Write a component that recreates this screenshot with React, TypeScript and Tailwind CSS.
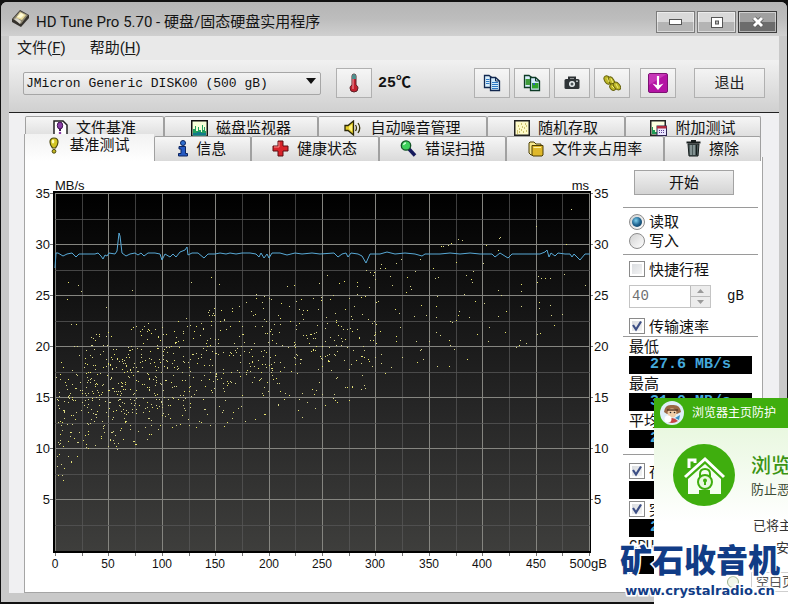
import { ReactNode, useState } from "react"

const CJK = "font-['Liberation_Sans','Noto_Sans_CJK_SC',sans-serif]"
const UI = "font-['Roboto','Noto_Sans_CJK_SC',sans-serif]"
const MONO = "font-['Liberation_Mono','Noto_Sans_CJK_SC',monospace]"

/* ---------- icons ---------- */

function DiskIcon() {
    return (
        <svg width="18" height="18" viewBox="0 0 18 18" aria-hidden="true">
            <path d="M0 9 L8 0 L17 5 L17 8 L9 17 L0 12 Z" fill="#35322d" />
            <path d="M1 9 L8 1 L16 5 L9 14 Z" fill="#8f8873" />
            <path d="M4 8 L8 2 L14 5 L10 10 Z" fill="#e9dc9c" />
            <path d="M5 7 L9 3 L12 5 L9 8 Z" fill="#fffbd8" />
            <path d="M2 9 L5 8 L9 11 L8 14 Z" fill="#d5d2c8" />
        </svg>
    )
}

function ThermometerIcon() {
    return (
        <svg width="14" height="20" viewBox="0 0 14 20" aria-hidden="true">
            <path d="M5 3 Q5 1 7 1 Q9 1 9 3 V12 Q11 13 11 15 Q11 19 7 19 Q3 19 3 15 Q3 13 5 12 Z" fill="#c3202f" stroke="#5c2228" />
            <path d="M5 3 Q5 1 7 1 Q9 1 9 3 V6 H5 Z" fill="#4f8f8d" />
            <path d="M6 6 V16" stroke="#f4a0a8" />
        </svg>
    )
}

function CopyIcon({ picture = false }: { picture?: boolean }) {
    const ink = picture ? "#0d3b26" : "#12284f"
    return (
        <svg width="18" height="18" viewBox="0 0 18 18" aria-hidden="true">
            <path d="M1.500 1.500 H6 L9.500 4 V13.500 H1.500 Z" fill="#d9effc" stroke={ink} strokeWidth="1.300" />
            <path d="M7.500 3.500 H12.500 L16.500 7 V16.500 H7.500 Z" fill="#d3ebfb" stroke={ink} strokeWidth="1.300" />
            <path d="M12.500 3.500 V7 H16.500" fill="none" stroke={ink} />
            {picture ? (
                <g>
                    <rect x="2.500" y="5" width="4.500" height="6" fill="#3f9b3a" />
                    <rect x="9" y="9" width="6.500" height="5.500" fill="#2fa32c" />
                    <rect x="10" y="9" width="2" height="2" fill="#2d66b5" />
                </g>
            ) : (
                <path d="M3 5.500 H6.500 M3 7.500 H6.500 M3 9.500 H6.500 M9 8.500 H15 M9 10.500 H15 M9 12.500 H15 M9 14.500 H15" stroke="#2d78c4" />
            )}
        </svg>
    )
}

function CameraIcon() {
    return (
        <svg width="16" height="14" viewBox="0 0 16 14" aria-hidden="true">
            <path d="M5 3 V1.500 H11 V3" fill="none" stroke="#2b3033" strokeWidth="2" />
            <rect x="0.500" y="3" width="15" height="10" rx="1.500" fill="#2f3437" />
            <circle cx="8" cy="8" r="3" fill="#e9eef0" />
            <circle cx="8" cy="8" r="1.500" fill="#4d5558" />
            <rect x="12" y="4.500" width="2" height="1.500" fill="#aeb6b8" />
        </svg>
    )
}

function CoinsIcon() {
    return (
        <svg width="18" height="18" viewBox="0 0 18 18" aria-hidden="true">
            <g fill="#bdb728" stroke="#66620f">
                <ellipse cx="4.500" cy="6" rx="3" ry="4.500" transform="rotate(-30 4.500 6)" />
                <ellipse cx="8.500" cy="7" rx="2.500" ry="4.500" transform="rotate(-30 8.500 7)" />
                <ellipse cx="10" cy="13" rx="3" ry="3.500" transform="rotate(-40 10 13)" />
                <ellipse cx="14" cy="12" rx="2.800" ry="4.500" transform="rotate(-40 14 12)" />
            </g>
            <path d="M4 4 L6 8 M8 4.500 L10 9 M9 12 L11 14 M13 10 L15 14" stroke="#f0ec76" />
        </svg>
    )
}

function DownIcon() {
    return (
        <svg width="20" height="20" viewBox="0 0 20 20" aria-hidden="true">
            <rect x="0.500" y="0.500" width="19" height="19" rx="1.500" fill="#b414a4" stroke="#7c1272" />
            <path d="M1 1 H19 L1 12 Z" fill="#cf45c1" opacity="0.700" />
            <path d="M10 3 V13" stroke="#fff" strokeWidth="2.200" />
            <path d="M4.500 10.500 L10 12.500 L15.500 10.500 L10 17 Z" fill="#fff" />
        </svg>
    )
}

function FileMarkIcon() {
    return (
        <svg width="15" height="16" viewBox="0 0 15 16" aria-hidden="true">
            <path d="M1 1 H10 L14 5 V15 H1 Z" fill="#fff" stroke="#222" strokeWidth="1.500" />
            <ellipse cx="7" cy="5.500" rx="2.700" ry="3.500" fill="#8b3fa8" stroke="#3d1450" />
            <path d="M6 9 H8 V11 H6 Z" fill="#3d1450" />
            <circle cx="7" cy="13" r="1.300" fill="#8b3fa8" />
        </svg>
    )
}

function MonitorIcon() {
    return (
        <svg width="17" height="17" viewBox="0 0 17 17" aria-hidden="true">
            <rect x="0.750" y="0.750" width="15.500" height="15.500" fill="#f7ffd9" stroke="#111" strokeWidth="1.500" />
            <path d="M2 15.500 V9 H4 V6 H5 V11 H7 V7 H8 V10 H10 V12 H11 V5 H12 V10 H13 V7 H14 V11 H15 V15.500 Z" fill="#21a05f" />
            <path d="M2 15.500 V13 H6 V12 H10 V13 H15 V15.500 Z" fill="#127a8a" />
        </svg>
    )
}

function SpeakerIcon() {
    return (
        <svg width="18" height="16" viewBox="0 0 18 16" aria-hidden="true">
            <path d="M1 5.500 H4 L9.500 1 V15 L4 10.500 H1 Z" fill="#e6cf2c" stroke="#2c2808" strokeWidth="1.300" />
            <path d="M5 6.500 L8 4.500 V11.500 L5 9 Z" fill="#fff27a" />
            <path d="M11.500 5 Q13.500 8 11.500 11 M14 3 Q17.500 8 14 13" fill="none" stroke="#3c370e" strokeWidth="1.300" />
        </svg>
    )
}

function RandomIcon() {
    return (
        <svg width="16" height="16" viewBox="0 0 16 16" aria-hidden="true">
            <rect x="0.750" y="0.750" width="14.500" height="14.500" fill="#fffbc9" stroke="#222" strokeWidth="1.500" />
            <path d="M3 11h1M5 12h1M5 9h1M7 10h1M8 7h1M10 8h1M11 4h1M12 6h1M9 12h1M12 11h1M4 6h1M7 4h1M3 13h1" stroke="#a08c18" />
        </svg>
    )
}

function ExtraIcon() {
    return (
        <svg width="17" height="16" viewBox="0 0 17 16" aria-hidden="true">
            <rect x="0.750" y="0.750" width="14.500" height="14.500" fill="#fbffe0" stroke="#222" strokeWidth="1.500" />
            <path d="M2 14 V7 H3 V10 H5 V12 H7 V14 Z" fill="#1f9a55" />
            <rect x="7" y="6" width="9.500" height="9.500" fill="#e9e4ff" stroke="#2e2450" />
            <rect x="7" y="6" width="9.500" height="2.500" fill="#b02a3d" />
            <path d="M9 10.500h6M9 12.500h6" stroke="#5a3f8f" strokeDasharray="1 1" />
        </svg>
    )
}

function BulbIcon() {
    return (
        <svg width="10" height="17" viewBox="0 0 10 17" aria-hidden="true">
            <path d="M5 1 Q9 1 9 5 Q9 8 6.500 11 H3.500 Q1 8 1 5 Q1 1 5 1 Z" fill="#d3c625" stroke="#4e4a10" strokeWidth="1.200" />
            <ellipse cx="4" cy="4.500" rx="1.300" ry="2" fill="#fffcb5" />
            <circle cx="5" cy="14.300" r="1.900" fill="#c2b620" stroke="#4e4a10" />
        </svg>
    )
}

function InfoIcon() {
    return (
        <svg width="10" height="17" viewBox="0 0 10 17" aria-hidden="true">
            <circle cx="5" cy="3" r="2.500" fill="#2f6fd0" stroke="#0c2560" />
            <path d="M1 6.500 H7.500 V13.500 H9.500 V16 H0.500 V13.500 H3 V9 H1 Z" fill="#2559c2" stroke="#0c2560" />
        </svg>
    )
}

function CrossIcon() {
    return (
        <svg width="17" height="17" viewBox="0 0 17 17" aria-hidden="true">
            <path d="M6 1 H11 V6 H16 V11 H11 V16 H6 V11 H1 V6 H6 Z" fill="#d8232a" stroke="#5d0f12" />
            <path d="M7 2 V7 H2" fill="none" stroke="#f58f8c" />
        </svg>
    )
}

function MagnifierIcon() {
    return (
        <svg width="17" height="17" viewBox="0 0 17 17" aria-hidden="true">
            <path d="M9 9 L15 15.500" stroke="#15195c" strokeWidth="3.500" />
            <circle cx="6" cy="5.500" r="4.700" fill="#3fd05c" stroke="#145426" strokeWidth="1.300" />
            <path d="M3.500 5 Q4 3 6 3" fill="none" stroke="#c9ffd0" strokeWidth="1.300" />
        </svg>
    )
}

function FolderIcon() {
    return (
        <svg width="16" height="16" viewBox="0 0 16 16" aria-hidden="true">
            <path d="M1 2 L2 1 H6 L8 3 H13 V12 L11 14 H3 L1 12 Z" fill="#f5e78c" stroke="#4c3e05" />
            <path d="M4 4.500 H15 V14 L14 15 H5 L4 14 Z" fill="#dfb82a" stroke="#4c3e05" />
            <path d="M5.500 6.500 H13" stroke="#fff2a0" />
        </svg>
    )
}

function TrashIcon() {
    return (
        <svg width="15" height="17" viewBox="0 0 15 17" aria-hidden="true">
            <path d="M0.500 2.500 H14.500 M5 1 H10" stroke="#161d1d" strokeWidth="2" />
            <path d="M2 4 H13 L12 16 H3 Z" fill="#4d5c5c" stroke="#161d1d" />
            <path d="M5 5 V15 M8 5 V15" stroke="#b9c8c8" />
            <path d="M10.500 5 V15" stroke="#161d1d" />
        </svg>
    )
}

/* ---------- tabs ---------- */

const upperTabs = [
    { name: "文件基准", icon: <FileMarkIcon /> },
    { name: "磁盘监视器", icon: <MonitorIcon /> },
    { name: "自动噪音管理", icon: <SpeakerIcon /> },
    { name: "随机存取", icon: <RandomIcon /> },
    { name: "附加测试", icon: <ExtraIcon /> },
]

const lowerTabs = [
    { name: "基准测试", icon: <BulbIcon /> },
    { name: "信息", icon: <InfoIcon /> },
    { name: "健康状态", icon: <CrossIcon /> },
    { name: "错误扫描", icon: <MagnifierIcon /> },
    { name: "文件夹占用率", icon: <FolderIcon /> },
    { name: "擦除", icon: <TrashIcon /> },
]

function Tab({ name, icon, active = false }: { name: string, icon: ReactNode, active?: boolean }) {
    return (
        <button
            type="button"
            role="tab"
            aria-selected={active}
            className={
                active
                    ? "z-10 -mt-0.5 flex items-center justify-center gap-2.5 whitespace-nowrap border-l border-[#a5a5a5] bg-linear-to-b from-[#f2f2f2] to-white pb-1"
                    : "flex items-center justify-center gap-2 whitespace-nowrap rounded-t-xs border border-b-0 border-[#a0a0a0] bg-linear-to-b from-[#f6f6f6] to-[#dadada]"
            }
        >
            {icon}
            <span>{name}</span>
        </button>
    )
}

/* ---------- chart ---------- */

const LEFT = 55
const RIGHT = 589
const TOP = 193
const STEP_Y = 51

const transferRate = [
    55, 268, 56, 253, 58, 253, 63, 256, 67, 254, 72, 253, 76, 257, 79, 254, 85, 254, 95, 254, 98, 253, 101, 256, 103, 259,
    105, 255, 107, 256, 109, 253, 115, 254, 117, 251, 119, 233, 120, 236, 122, 253, 126, 256, 130, 254, 135, 253, 138, 255,
    141, 253, 144, 256, 148, 253, 155, 253, 160, 254, 162, 260, 165, 254, 170, 257, 173, 254, 176, 257, 180, 252, 185, 250,
    187, 247, 188, 255, 192, 253, 198, 253, 204, 258, 208, 254, 215, 254, 220, 253, 226, 254, 230, 253, 236, 254, 242, 253,
    250, 253, 256, 254, 259, 257, 261, 253, 264, 258, 267, 254, 269, 258, 272, 253, 280, 253, 287, 255, 295, 253, 302, 254,
    312, 253, 320, 254, 334, 253, 338, 257, 342, 254, 346, 253, 348, 257, 351, 253, 358, 254, 362, 256, 366, 263, 370, 254,
    380, 254, 387, 252, 395, 254, 405, 253, 415, 254, 422, 256, 425, 254, 440, 254, 450, 253, 460, 254, 470, 253, 480, 254,
    492, 254, 495, 257, 500, 253, 508, 258, 512, 254, 525, 254, 540, 254, 545, 252, 547, 250, 549, 257, 551, 253, 555, 256,
    558, 253, 565, 254, 570, 254, 572, 257, 574, 254, 580, 260, 585, 254, 590, 254,
]

// access time samples per 25 gB slice: how many, fastest and slowest in ms
const slices = [
    [85, 5, 18], [105, 9.8, 21], [120, 9.8, 21.5], [95, 10, 22], [80, 11.5, 22.5], [66, 12, 23],
    [60, 12, 24], [58, 12.5, 25], [50, 13, 25.5], [50, 12.5, 26], [50, 14, 27], [48, 14.5, 27], [32, 16, 28],
]

// samples far from the rest, in chart coordinates
const loose = [
    68, 282, 78, 285, 81, 291, 67, 299, 106, 307, 71, 324, 76, 324, 132, 290, 191, 282, 211, 277, 219, 284, 287, 286, 294, 285,
    380, 268, 381, 264, 385, 268, 396, 263, 401, 259, 407, 277, 410, 286, 411, 289, 406, 292, 415, 271, 420, 259, 433, 268,
    435, 278, 438, 277, 441, 246, 443, 246, 448, 245, 451, 243, 458, 239, 462, 240, 456, 262, 473, 271, 466, 275, 471, 279,
    472, 282, 464, 294, 475, 301, 484, 303, 483, 263, 486, 245, 499, 238, 500, 237, 498, 250, 498, 290, 501, 295, 521, 284,
    521, 291, 536, 226, 537, 282, 538, 276, 541, 278, 545, 278, 550, 278, 564, 274, 566, 244, 571, 209, 585, 285, 539, 302,
    550, 305, 551, 315, 554, 325, 562, 314, 537, 334, 540, 333, 539, 308, 521, 306, 506, 311, 498, 316, 489, 327, 505, 332,
    488, 341, 520, 340, 519, 345, 526, 343, 516, 347, 477, 334, 469, 317, 459, 311, 458, 315, 450, 321, 452, 322, 456, 320,
    440, 335, 436, 332, 449, 340, 450, 345, 454, 349, 467, 359, 429, 341, 437, 366, 449, 366, 420, 350, 421, 349, 417, 362,
    423, 359, 426, 315, 436, 306, 436, 317, 437, 296, 421, 305, 414, 316, 399, 313, 395, 309, 392, 285, 390, 276, 396, 336,
    402, 357, 381, 363, 385, 373, 391, 367, 381, 354, 376, 302, 378, 301, 375, 332, 396, 341, 400, 327, 416, 341, 380, 331,
]

function scatter() {
    const dots: number[][] = []
    let seed = 90217
    const next = () => {
        seed = (seed * 16807) % 2147483647
        return seed / 2147483647
    }
    slices.slice(0, 12).forEach(([count, low, high], i) => {
        const [, nextLow, nextHigh] = slices[i + 1]
        for (let n = 0; n < count; n++) {
            const t = next()
            const from = low + (nextLow - low) * t
            const to = high + (nextHigh - high) * t
            const spread = next() < 0.6 ? next() : (next() + next() + next()) / 3
            dots.push([Math.round(LEFT + 1 + (i + t) * 26.7), Math.round(550 - (from + spread * (to - from)) * 10.2)])
        }
    })
    for (let i = 0; i < loose.length; i += 2) dots.push([loose[i], loose[i + 1]])
    return dots
}

const dots = scatter()

function Chart() {
    const columns = Array.from({ length: 21 }, (_, i) => Math.round(LEFT + (i * (RIGHT - LEFT)) / 20))
    const rows = Array.from({ length: 14 }, (_, i) => Math.round(TOP + (i * STEP_Y) / 2))
    const labels = [35, 30, 25, 20, 15, 10, 5]
    return (
        <svg viewBox="25 157 590 435" className={`block h-auto w-full ${CJK}`} role="img" aria-label="基准测试">
            <defs>
                <linearGradient id="plot" x1="0" y1="0" x2="0" y2="1">
                    <stop offset="0" stopColor="#000" />
                    <stop offset="0.300" stopColor="#131313" />
                    <stop offset="0.600" stopColor="#262626" />
                    <stop offset="1" stopColor="#3e3e3c" />
                </linearGradient>
            </defs>
            <rect x="53" y="191" width="538" height="362" fill="#000" />
            <rect x="55" y="193" width="535" height="358" fill="url(#plot)" />
            <g shapeRendering="crispEdges">
                {columns.map((x, i) => (
                    <rect key={x} x={x} y="193" width="1" height="358" fill={i % 2 ? "#5a5a5a" : "#858580"} fillOpacity={i % 2 ? 0.7 : 1} />
                ))}
                {rows.map((y, i) => (
                    <rect key={y} x="55" y={y} width="535" height="1" fill={i % 2 ? "#555" : "#858580"} fillOpacity={i % 2 ? 0.8 : 1} />
                ))}
                {columns.map((x) => <rect key={x} x={x} y="553" width="1" height="3" fill="#777" />)}
                {labels.map((label, i) => (
                    <g key={label} fill="#777">
                        <rect x="50" y={TOP + i * STEP_Y} width="3" height="1" />
                        <rect x="591" y={TOP + i * STEP_Y} width="2" height="1" />
                    </g>
                ))}
                {dots.map(([x, y], i) => (
                    <rect key={i} x={x} y={y} width="1" height="1" fill={i % 3 ? "#d8d58a" : "#ece86c"} />
                ))}
            </g>
            <polyline points={transferRate.join(" ")} fill="none" stroke="#58a9d6" strokeWidth="1" />
            <g fill="#111" fontSize="13">
                <text x="55" y="190">MB/s</text>
                <text x="589" y="190" textAnchor="end">ms</text>
                {labels.map((label, i) => (
                    <g key={label}>
                        <text x="50" y={198 + i * STEP_Y} textAnchor="end">{label}</text>
                        <text x="594" y={198 + i * STEP_Y}>{label}</text>
                    </g>
                ))}
                {Array.from({ length: 10 }, (_, i) => (
                    <text key={i} x={columns[i * 2]} y="568" fontSize="12" textAnchor="middle">{i * 50}</text>
                ))}
                <text x="607" y="568" textAnchor="end">500gB</text>
            </g>
        </svg>
    )
}

/* ---------- side column ---------- */

function Tick({ label, checked = false }: { label: string, checked?: boolean }) {
    const [on, setOn] = useState(checked)
    return (
        <label className="flex h-5 items-center gap-1 pl-1.5 whitespace-nowrap">
            <span className="relative h-4 w-4 shrink-0">
                <input
                    type="checkbox"
                    checked={on}
                    onChange={(e) => setOn(e.target.checked)}
                    className="block h-4 w-4 appearance-none border border-[#8a8a8a] bg-linear-to-br from-[#d5d8dc] to-[#f8f8f8] outline-2 -outline-offset-3 outline-white"
                />
                {on && (
                    <svg width="16" height="16" viewBox="0 0 16 16" className="pointer-events-none absolute inset-0" aria-hidden="true">
                        <path d="M4 7 L7 11.500 L12 3.500" fill="none" stroke="#3d4f86" strokeWidth="2.200" />
                    </svg>
                )}
            </span>
            {label}
        </label>
    )
}

function Readout({ value }: { value: string }) {
    return (
        <output className={`mx-1.5 block h-[18px] bg-black text-center text-[15px] leading-[18px] font-bold text-[#45a9dc] ${MONO}`}>
            {value}
        </output>
    )
}

function Side() {
    const [mode, setMode] = useState("read")
    return (
        <div className="flex w-[147px] shrink-0 flex-col pr-1 pl-2 text-[15px] leading-[19px] text-[#111]">
            <button type="button" className="mt-[13px] mr-6 ml-[11px] h-[25px] border border-[#a3a3a3] bg-linear-to-b from-[#f0f0f0] to-[#d4d4d4]">
                开始
            </button>
            <div className="mt-3 border-y border-[#9a9a9a] py-1">
                {[["read", "读取"], ["write", "写入"]].map(([key, text]) => (
                    <label key={key} className="flex h-[19px] items-center gap-1 pl-1.5">
                        <span className="relative h-4 w-4">
                            <input
                                type="radio"
                                name="mode"
                                checked={mode === key}
                                onChange={() => setMode(key)}
                                className="block h-4 w-4 appearance-none rounded-full border border-[#8c8c8c] bg-linear-to-br from-[#d2d2d2] to-white"
                            />
                            {mode === key && (
                                <span className="pointer-events-none absolute inset-[3px] rounded-full bg-radial-[at_40%_35%] from-[#7fd0ee] via-[#1f6390] to-[#0b2c48]" />
                            )}
                        </span>
                        {text}
                    </label>
                ))}
            </div>
            <div className="border-b border-[#9a9a9a] pt-1">
                <Tick label="快捷行程" />
                <div className={`mt-1.5 flex items-center pl-1.5 ${MONO}`}>
                    <div className="flex h-[23px] w-[82px] items-center border border-[#c4c4c4] bg-white">
                        <input aria-label="快捷行程 gB" defaultValue="40" className="w-full min-w-0 pl-0.5 text-[14px] text-[#6f6f6f]" />
                        <span className="flex h-full w-5 shrink-0 flex-col border-l border-[#bbb]">
                            <button type="button" aria-label="+" className="flex flex-1 items-center justify-center border-b border-[#bbb] bg-[#ececec]">
                                <svg width="7" height="4" viewBox="0 0 7 4"><path d="M0 4 L3.500 0 L7 4Z" fill="#9a9a9a" /></svg>
                            </button>
                            <button type="button" aria-label="-" className="flex flex-1 items-center justify-center bg-[#ececec]">
                                <svg width="7" height="4" viewBox="0 0 7 4"><path d="M0 0 L3.500 4 L7 0Z" fill="#9a9a9a" /></svg>
                            </button>
                        </span>
                    </div>
                    <span className="pl-4 text-[14px]">gB</span>
                </div>
                <div className="pt-2">
                    <Tick label="传输速率" checked />
                </div>
            </div>
            <div className="border-b border-[#9a9a9a] pb-1.5">
                <p className="pl-1.5">最低</p>
                <Readout value="27.6 MB/s" />
                <p className="pl-1.5">最高</p>
                <Readout value="31.0 MB/s" />
                <p className="pl-1.5">平均</p>
                <Readout value="28.9 MB/s" />
            </div>
            <div className="pt-1.5">
                <Tick label="存取时间" checked />
                <Readout value="17.8 ms" />
                <Tick label="突发速率" checked />
                <Readout value="28.1 MB/s" />
                <p className={`pl-1.5 text-[14px] ${MONO}`}>CPU占用率</p>
                <Readout value="2.5%" />
            </div>
        </div>
    )
}

/* ---------- window ---------- */

const frameButton = "flex h-[22px] w-[39px] items-center justify-center border outline-1 -outline-offset-2 outline-white/50"
const toolButton = "flex h-[30px] w-9 items-center justify-center border border-[#b0b0b0] bg-linear-to-b from-[#f6f6f6] to-[#e2e2e2]"

function TitleBar() {
    return (
        <header className="flex h-[34px] items-center rounded-t-md bg-linear-to-b from-[#b5b5b5] via-[#bdbdbd] to-[#d0d0d0] pr-2.5 pl-[11px]">
            <DiskIcon />
            <h1 className={`flex-1 truncate pt-1.5 pl-1.5 text-[15px] text-[#141414] ${UI}`}>HD Tune Pro 5.70 - 硬盘/固态硬盘实用程序</h1>
            <div className="flex gap-0.5 pt-1.5">
                <button type="button" aria-label="最小化" className={`${frameButton} border-[#7b7b7b] bg-linear-to-b from-[#d9d9d9] from-50% to-[#b4b4b4] to-50%`}>
                    <svg width="13" height="6" viewBox="0 0 13 6"><rect x="0.500" y="0.500" width="12" height="5" fill="#fff" stroke="#555" /></svg>
                </button>
                <button type="button" aria-label="最大化" className={`${frameButton} border-[#7b7b7b] bg-linear-to-b from-[#d9d9d9] from-50% to-[#b4b4b4] to-50%`}>
                    <svg width="12" height="11" viewBox="0 0 12 11">
                        <rect x="0.500" y="0.500" width="11" height="10" fill="#fff" stroke="#555" />
                        <rect x="4.500" y="4" width="3" height="3" fill="#bbb" stroke="#555" />
                    </svg>
                </button>
                <button type="button" aria-label="关闭" className={`${frameButton} border-[#3c3c3c] bg-linear-to-b from-[#a0a0a0] from-50% to-[#6c6c6c] to-50%`}>
                    <svg width="14" height="12" viewBox="0 0 14 12">
                        <path d="M3 2 L11 10 M11 2 L3 10" stroke="#555" strokeWidth="4.500" />
                        <path d="M3 2 L11 10 M11 2 L3 10" stroke="#fff" strokeWidth="3" />
                    </svg>
                </button>
            </div>
        </header>
    )
}

function Toolbar() {
    return (
        <div className="flex h-[53px] items-start border-b border-[#222] bg-linear-to-b from-[#f1f1f1] to-[#d0d0d0] pt-2 pr-3.5 pl-3.5">
            <div className="relative mt-0.5 mr-[15px] w-[298px] shrink">
                <select
                    aria-label="磁盘"
                    className={`h-[23px] w-full appearance-none rounded-xs border border-[#a6a6a6] bg-linear-to-b from-[#f3f3f3] to-[#dedede] pl-0.5 text-[13px] text-[#111] ${MONO}`}
                >
                    <option>JMicron Generic DISK00 (500 gB)</option>
                </select>
                <svg width="10" height="6" viewBox="0 0 10 6" className="pointer-events-none absolute top-2 right-[5px]"><path d="M0 0 H10 L5 6Z" fill="#111" /></svg>
            </div>
            <button type="button" aria-label="温度" className={toolButton}><ThermometerIcon /></button>
            <span className={`pt-1 pl-1.5 text-[15px] leading-6 font-bold text-[#111] ${MONO}`}>25℃</span>
            <div className="ml-auto flex gap-1">
                <button type="button" aria-label="复制文本" className={toolButton}><CopyIcon /></button>
                <button type="button" aria-label="复制图像" className={toolButton}><CopyIcon picture /></button>
                <button type="button" aria-label="截图" className={toolButton}><CameraIcon /></button>
                <button type="button" aria-label="购买" className={toolButton}><CoinsIcon /></button>
            </div>
            <button type="button" aria-label="保存" className={`ml-2.5 ${toolButton}`}><DownIcon /></button>
            <button type="button" className="ml-[18px] h-[30px] w-[71px] border border-[#b0b0b0] bg-linear-to-b from-[#f4f4f4] to-[#dedede] text-[15px] text-[#222]">
                退出
            </button>
        </div>
    )
}

/* ---------- corner pop-up and site mark ---------- */

function Popup() {
    return (
        <aside className="absolute right-0 bottom-0 z-20 h-[206px] w-[134px] overflow-hidden bg-linear-to-b from-[#e2f5d6] to-white to-60% whitespace-nowrap">
            <div className="flex h-[30px] items-center gap-2 bg-[#3fae0e] pl-1.5">
                <svg width="24" height="24" viewBox="0 0 24 24" className="shrink-0" aria-hidden="true">
                    <circle cx="12" cy="12" r="12" fill="#dfeff8" />
                    <path d="M4 11 Q5 3 12 4 Q20 3 21 11 L17 13 H7 Z" fill="#9a6844" />
                    <circle cx="12" cy="12" r="4.500" fill="#f1cda8" />
                    <path d="M7 9 H18" stroke="#5b3a29" strokeWidth="1.500" />
                    <circle cx="10.500" cy="11.500" r="0.800" fill="#222" />
                    <circle cx="14.500" cy="11.500" r="0.800" fill="#222" />
                    <path d="M6 20 Q12 14 18 20 Q12 24 6 20Z" fill="#c64545" />
                    <circle cx="8" cy="18" r="3.500" fill="#fff" />
                    <path d="M15 17 L20 14 L19 19Z" fill="#3a8fc4" />
                </svg>
                <span className="text-[12px] text-white">浏览器主页防护</span>
            </div>
            <div className="flex pt-4 pl-[19px]">
                <svg width="62" height="62" viewBox="0 0 62 62" className="shrink-0" aria-hidden="true">
                    <circle cx="31" cy="31" r="31" fill="#3fae0e" />
                    <path d="M16 24 V16 H22 V19" fill="none" stroke="#fff" strokeWidth="3" />
                    <path d="M12 33 L32 15 L51 33" fill="none" stroke="#fff" strokeWidth="3" />
                    <path d="M32 20 L48 35 V50 H37 V46 H26 V50 H15 V35 Z" fill="#f4fff0" />
                    <path d="M27 34 V30 Q27 25 32 25 Q37 25 37 30 V34" fill="none" stroke="#3fae0e" strokeWidth="2" />
                    <circle cx="32" cy="38" r="7" fill="#e9f9df" stroke="#3fae0e" strokeWidth="2" />
                    <circle cx="32" cy="36.500" r="2" fill="#3fae0e" />
                    <path d="M32 37 V41" stroke="#3fae0e" strokeWidth="2" />
                </svg>
                <div className="pt-2 pl-4">
                    <p className="text-[20px] leading-7 font-medium text-[#3a9414]">浏览器主页</p>
                    <p className="text-[13px] leading-5 text-[#3c4b36]">防止恶意篡改</p>
                </div>
            </div>
            <p className="pt-2.5 pl-[99px] text-[13px] leading-5 text-[#333]">已将主页锁定</p>
            <p className="pl-[122px] text-[13px] leading-6 text-[#333]">安全</p>
            <label className="flex items-center gap-3 pt-3 pl-[73px] text-[13px] text-[#555]">
                <input type="radio" name="home" className="h-3 w-3 shrink-0 appearance-none rounded-full border border-[#9db38c] bg-[#f2f6ea]" />
                <span className="border border-[#cfcfcf] px-1 leading-[18px]">空白页</span>
            </label>
        </aside>
    )
}

function SiteMark() {
    return (
        <a href="#site" className="absolute right-2 bottom-px z-30 flex flex-col items-center whitespace-nowrap text-[#113c86] [paint-order:stroke_fill] [-webkit-text-stroke:3px_white]">
            <span className="text-[32px] leading-9 font-black">矿石收音机</span>
            <span className="font-['DejaVu_Sans',sans-serif] text-[13px] leading-6 font-bold">www.crystalradio.cn</span>
        </a>
    )
}

export default function App() {
    return (
        <div className={`relative min-h-screen overflow-hidden bg-[#111] px-px py-0.5 ${CJK}`}>
            <div className="rounded-t-md bg-[#c9c9c9] pb-[9px]">
                <TitleBar />
                <div className="mx-2 bg-[#f0f0f2]">
                    <nav className={`flex h-6 items-center gap-6 bg-[#e9e9e9] pl-2 text-[15px] text-[#1a1a1a] ${UI}`}>
                        <button type="button">文件(<u>F</u>)</button>
                        <button type="button">帮助(<u>H</u>)</button>
                    </nav>
                    <Toolbar />
                    <main className="pt-[3px] pr-4 pl-[15px] text-[15px] text-[#111]">
                        <div role="tablist">
                            <div className="grid h-5 grid-cols-[139fr_154fr_169fr_138fr_136fr] pr-0.5 pl-px">
                                {upperTabs.map((tab) => <Tab key={tab.name} {...tab} />)}
                            </div>
                            <div className="grid h-[21px] grid-cols-[130fr_97fr_128fr_128fr_158fr_97fr] pr-0.5">
                                {lowerTabs.map((tab, i) => <Tab key={tab.name} {...tab} active={i === 0} />)}
                            </div>
                        </div>
                        <section className="flex items-start border border-t-0 border-[#a5a5a5] bg-white">
                            <div className="min-w-0 flex-1">
                                <Chart />
                            </div>
                            <Side />
                        </section>
                    </main>
                </div>
            </div>
            <Popup />
            <SiteMark />
        </div>
    )
}
